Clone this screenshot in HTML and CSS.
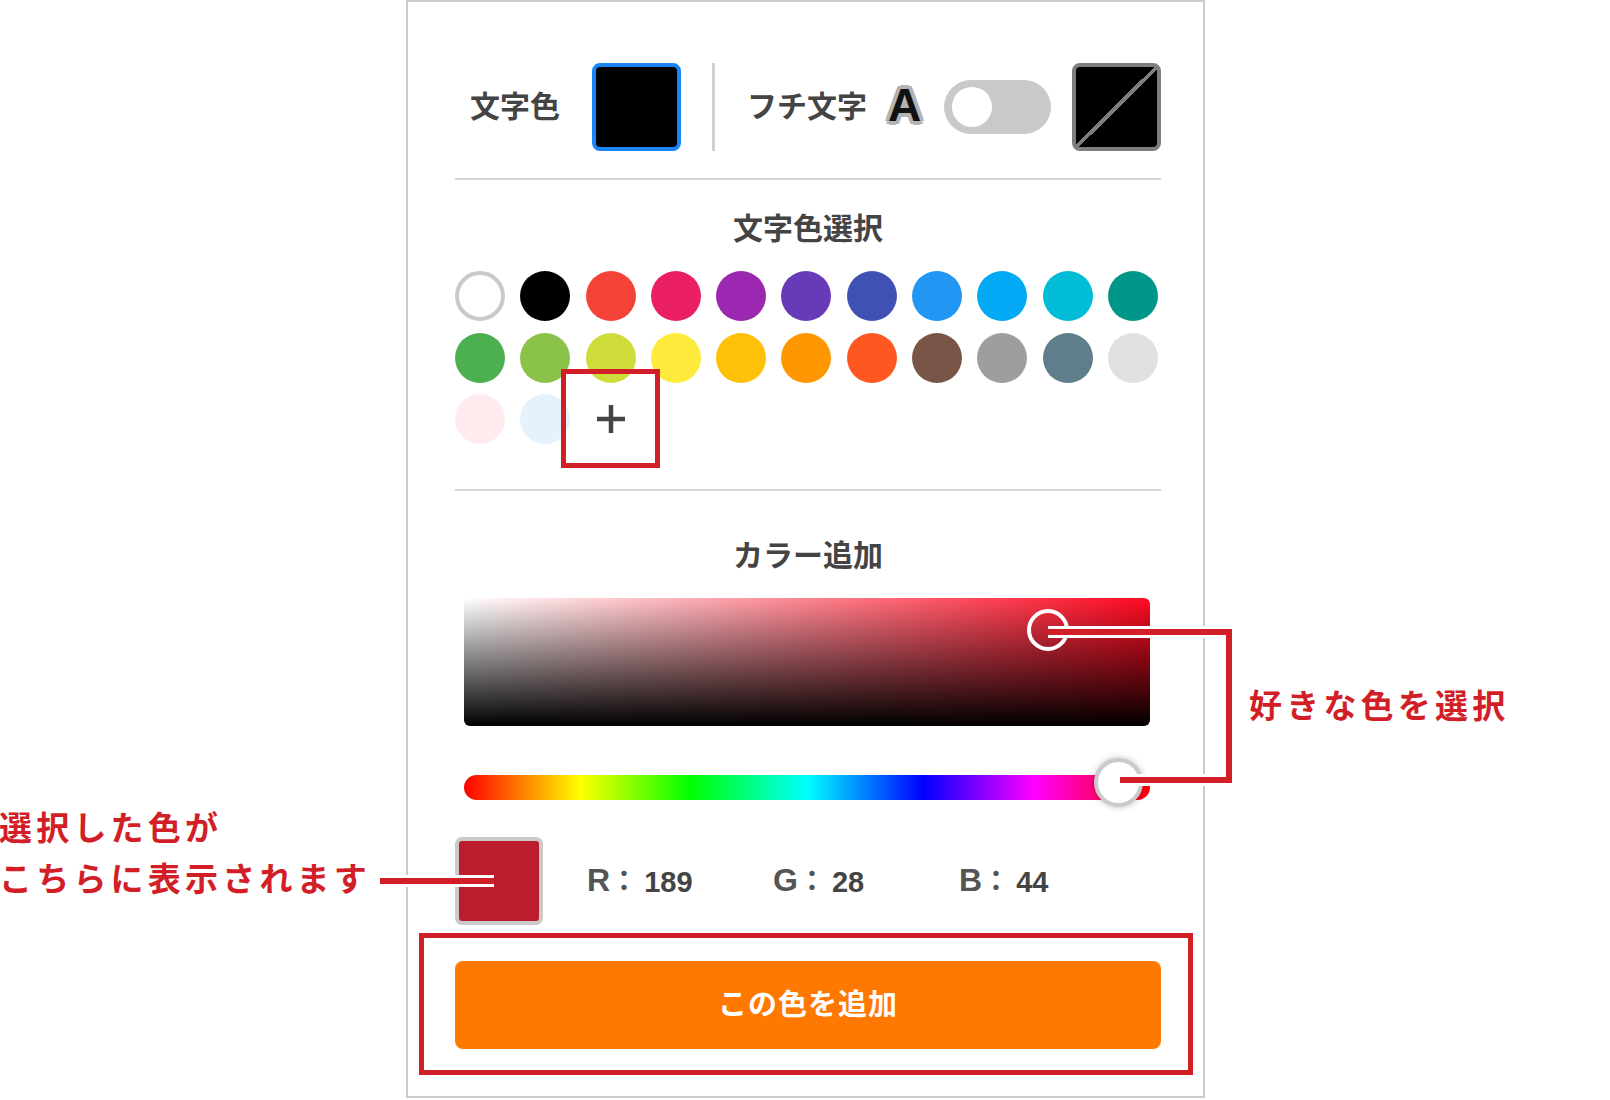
FILE: index.html
```html
<!DOCTYPE html>
<html lang="ja">
<head>
    <meta charset="UTF-8">
    <meta name="viewport" content="width=device-width, initial-scale=1.0">
    <title>カラー追加</title>

    <link rel="stylesheet" href="styles.css">
</head>
<body>

    <div class="stage">

        <div class="panel">
            <div class="top-row">
                <span class="label">文字色</span>
                <div class="swatch swatch-text"></div>
                <div class="vline"></div>
                <span class="label label-edge">フチ文字</span>
                <span class="edge-a">A</span>
                <div class="toggle"><div class="toggle-knob"></div></div>
                <div class="swatch swatch-edge"></div>
            </div>

            <hr class="divider first">

            <h2 class="title">文字色選択</h2>
            <div class="palette" id="palette">
                <!-- filled by script below -->
            </div>

            <hr class="divider second">

            <h2 class="title title-add">カラー追加</h2>
            <div class="sv-box">
                <div class="sv-knob"></div>
            </div>
            <div class="hue-bar">
                <div class="hue-knob"></div>
            </div>

            <div class="preview-row">
                <div class="preview"></div>
                <div class="rgb"><span class="ch">R</span><span class="colon">：</span><span class="num">189</span></div>
                <div class="rgb"><span class="ch">G</span><span class="colon">：</span><span class="num">28</span></div>
                <div class="rgb"><span class="ch">B</span><span class="colon">：</span><span class="num">44</span></div>
            </div>

            <div class="add-wrap">
                <button class="add-btn">この色を追加</button>
                <div class="mark mark-btn"></div>
            </div>
        </div>

        <svg class="leaders" width="1610" height="1100" viewBox="0 0 1610 1100">
            <path d="M1048 632 H1229 V780 H1120" fill="none" stroke="#fff" stroke-width="12"/>
            <path d="M1048 632 H1229 V780 H1120" fill="none" stroke="#d21e26" stroke-width="6"/>
            <path d="M380 881 H494" fill="none" stroke="#fff" stroke-width="12"/>
            <path d="M380 881 H494" fill="none" stroke="#d21e26" stroke-width="6"/>
        </svg>

        <p class="note note-right">好きな色を選択</p>
        <p class="note note-left">選択した色が<br>こちらに表示されます</p>
    </div>

    <script>
        const colors = [
            '#fff','#000','#f44336','#e91e63','#9c27b0','#673ab7','#3f51b5','#2196f3','#03a9f4','#00bcd4','#009688',
            '#4caf50','#8bc34a','#cddc39','#ffeb3b','#ffc107','#ff9800','#ff5722','#795548','#9e9e9e','#607d8b','#e0e0e0',
            '#ffebee','#e3f2fd'
        ]
        const palette = document.getElementById('palette')
        colors.map((c,index)=>{
            const dot = document.createElement('div')
            dot.className = index === 0 ? 'dot dot-white' : 'dot'
            dot.style.background = c
            palette.appendChild(dot)
        })
        const plus = document.createElement('div')
        plus.className = 'dot plus'
        plus.innerHTML = '<svg width="34" height="34" viewBox="0 0 34 34"><path d="M17 3V31M3 17H31" stroke="#444" stroke-width="4.5"/></svg><div class="mark mark-plus"></div>'
        palette.appendChild(plus)
    </script>
</body>
</html>
```

FILE: styles.css
```css
body{
    margin: 0;
    font-family: "Noto Sans CJK JP", "Noto Sans", sans-serif;
    background: #fff;
}

.stage{
    position: relative;
    width: 1610px;
    height: 1100px;
    overflow: hidden;
}

.panel{
    width: 799px;
    height: 1098px;
    margin-left: 406px;
    box-sizing: border-box;
    border: 2px solid #cbcbcb;
    padding: 61px 42px 0 47px;
}

/* top row */
.top-row{
    display: flex;
    align-items: center;
    height: 88px;
    white-space: nowrap;
}
.top-row > *{
    flex-shrink: 0;
}
.label{
    margin-left: 15px;
    margin-bottom: 6px;
    font-size: 30px;
    font-weight: bold;
    color: #444;
    line-height: 1;
}
.label-edge{
    margin-left: 32px;
}
.swatch{
    width: 89px;
    height: 88px;
    box-sizing: border-box;
    border-radius: 8px;
    background: #000;
}
.swatch-text{
    margin-left: 32px;
    border: 4px solid #1a84f8;
}
.vline{
    margin-left: 31px;
    width: 3px;
    height: 88px;
    background: #cfcfcf;
}
.edge-a{
    margin-left: 21px;
    margin-bottom: 4px;
    font-family: "Liberation Sans", Arial, sans-serif;
    font-weight: bold;
    font-size: 46px;
    line-height: 1;
    color: #111;
    text-shadow: 4px 0 0 #b3b3b3, -4px 0 0 #b3b3b3, 0 4px 0 #b3b3b3, 0 -4px 0 #b3b3b3,
                 3px 3px 0 #b3b3b3, -3px 3px 0 #b3b3b3, 3px -3px 0 #b3b3b3, -3px -3px 0 #b3b3b3,
                 2px 0 0 #b3b3b3, -2px 0 0 #b3b3b3, 0 2px 0 #b3b3b3, 0 -2px 0 #b3b3b3;
}
.toggle{
    margin-left: 23px;
    width: 107px;
    height: 54px;
    border-radius: 27px;
    background: #c9c9c9;
    display: flex;
    align-items: center;
    padding-left: 8px;
    box-sizing: border-box;
}
.toggle-knob{
    width: 40px;
    height: 40px;
    border-radius: 50%;
    background: #fff;
}
.swatch-edge{
    margin-left: 21px;
    border: 4px solid #7e7e7e;
    background: linear-gradient(to bottom right, #000 calc(50% - 2px), #7e7e7e calc(50% - 2px), #7e7e7e calc(50% + 2px), #000 calc(50% + 2px));
}

.divider{
    border: 0;
    height: 2px;
    background: #d6d6d6;
    margin: 27px 0 0 0;
}
.divider.second{
    margin-top: 45px;
}

.title{
    margin: 28px 0 0 0;
    text-align: center;
    font-size: 30px;
    line-height: 36px;
    font-weight: bold;
    color: #444;
}
.title-add{
    margin-top: 44px;
}

/* palette */
.palette{
    margin-top: 27px;
    display: grid;
    grid-template-columns: repeat(11, 50px);
    column-gap: 15.3px;
    row-gap: 11.5px;
}
.dot{
    position: relative;
    width: 50px;
    height: 50px;
    border-radius: 50%;
    box-sizing: border-box;
}
.dot-white{
    border: 4px solid #cacaca;
}
.plus{
    display: flex;
    align-items: center;
    justify-content: center;
}

.mark{
    position: absolute;
    border: 5px solid #d21e26;
}
.mark-plus{
    top: -25px;
    left: -25px;
    width: 99px;
    height: 99px;
    box-sizing: border-box;
}

/* picker */
.sv-box{
    position: relative;
    margin: 27px 11px 0 9px;
    height: 128px;
    border-radius: 6px;
    background: linear-gradient(to top, #000, rgba(0,0,0,0)), linear-gradient(to right, #fff, #ff0a22);
}
.sv-knob{
    position: absolute;
    left: 563px;
    top: 11px;
    width: 42px;
    height: 42px;
    box-sizing: border-box;
    border: 4px solid #fff;
    border-radius: 50%;
}
.hue-bar{
    position: relative;
    margin: 49px 11px 0 9px;
    height: 25px;
    border-radius: 13px;
    background: linear-gradient(to right, #f00 0%, #ff0 17%, #0f0 33%, #0ff 50%, #00f 67%, #f0f 83%, #f00 100%);
}
.hue-knob{
    position: absolute;
    left: 630px;
    top: -17px;
    width: 49px;
    height: 49px;
    box-sizing: border-box;
    border: 4px solid #cacaca;
    border-radius: 50%;
    background: #fff;
    box-shadow: 0 0 6px rgba(0,0,0,0.25);
}

/* preview */
.preview-row{
    margin-top: 37px;
    display: flex;
    align-items: center;
    height: 88px;
}
.preview{
    width: 88px;
    height: 88px;
    box-sizing: border-box;
    border: 4px solid #cacaca;
    border-radius: 7px;
    background: #bd1c2c;
}
.rgb{
    width: 186px;
    margin-bottom: 5px;
    font-family: "Liberation Sans", Arial, sans-serif;
    font-weight: bold;
    color: #555;
    white-space: nowrap;
}
.preview + .rgb{
    margin-left: 44px;
}
.ch{
    font-size: 32px;
}
.colon{
    font-family: "Noto Sans CJK JP", sans-serif;
    font-size: 28px;
    font-weight: bold;
    color: #555;
}
.num{
    margin-left: 6px;
    font-size: 29px;
    color: #444;
    vertical-align: -1px;
}

/* add button */
.add-wrap{
    position: relative;
    margin-top: 36px;
}
.add-btn{
    display: block;
    width: 100%;
    height: 88px;
    padding: 0 0 6px 0;
    border: 0;
    border-radius: 8px;
    background: #ff7800;
    color: #fff;
    font-family: "Noto Sans CJK JP", sans-serif;
    font-size: 29px;
    font-weight: bold;
    letter-spacing: 1px;
}
.mark-btn{
    top: -28px;
    bottom: -26px;
    left: -36px;
    right: -32px;
}

/* annotations */
.leaders{
    position: absolute;
    top: 0;
    left: 0;
}
.note{
    position: absolute;
    margin: 0;
    color: #d21e26;
    font-size: 33px;
    font-weight: bold;
    letter-spacing: 4.2px;
    line-height: 51px;
    white-space: nowrap;
}
.note-right{
    left: 1249px;
    top: 679px;
}
.note-left{
    left: -1px;
    top: 801px;
}
```
